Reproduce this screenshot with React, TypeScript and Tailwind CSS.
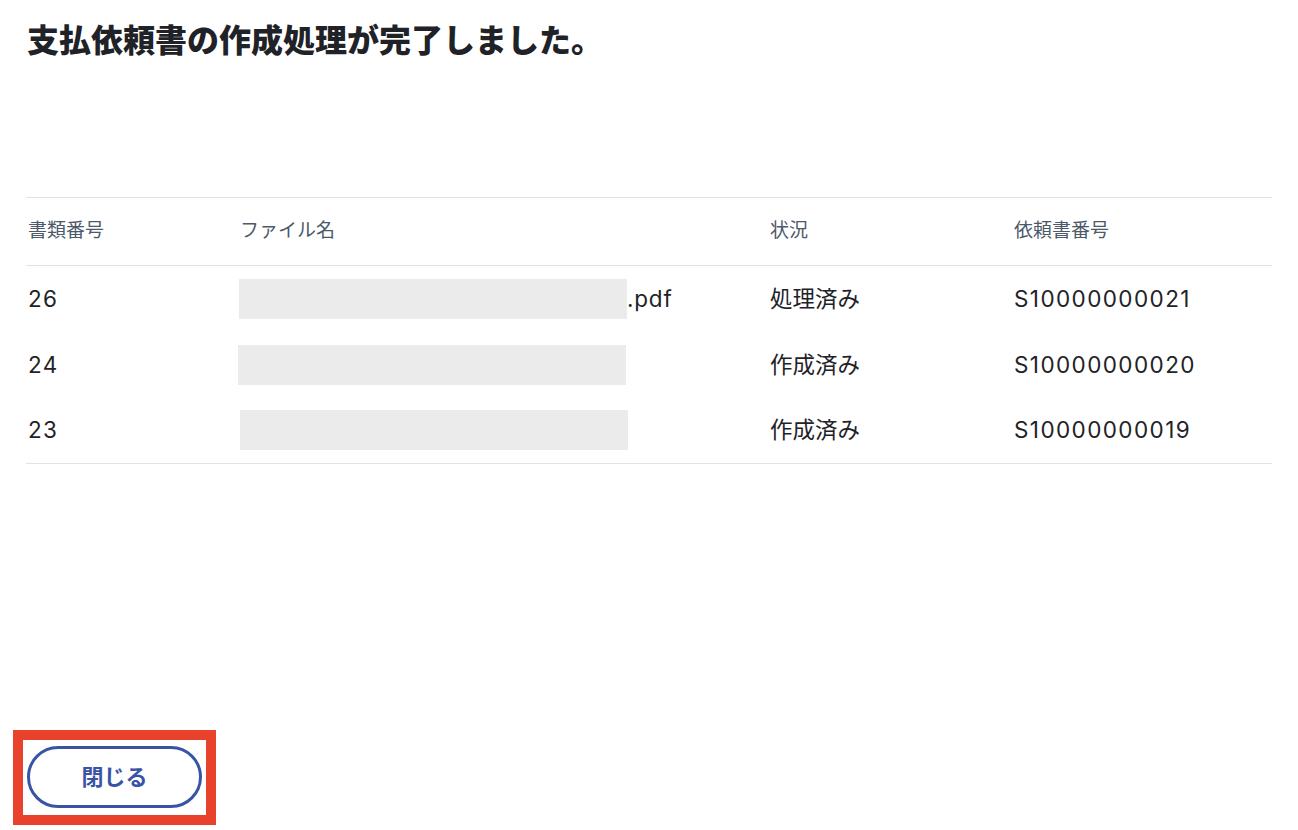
const rows = [
  { no: "26", offset: "ml-[-1px]", ext: ".pdf", status: "処理済み", request: "S10000000021" },
  { no: "24", offset: "ml-[-2px]", ext: "", status: "作成済み", request: "S10000000020" },
  { no: "23", offset: "ml-0", ext: "", status: "作成済み", request: "S10000000019" },
]

export default function App() {
  return (
    <div
      className="min-h-[830px] bg-white text-[#1f2328]"
      style={{ fontFamily: '"Inter", "Noto Sans CJK JP", sans-serif' }}
    >
      <div className="px-[26px] pt-[17px]">
        <h1 className="text-[32px] font-black leading-[48px] pl-[1px]">支払依頼書の作成処理が完了しました。</h1>

        {/* Result table */}
        <table className="mt-[132px] w-full border-collapse table-fixed">
          <thead>
            <tr className="border-y border-[#dfe2e6] text-left text-[19px] text-[#4d5968]">
              <th className="h-[68px] w-[212px] pl-[2px] font-normal">書類番号</th>
              <th className="w-[530px] pl-[2px] font-normal">ファイル名</th>
              <th className="w-[244px] pl-[2px] font-normal">状況</th>
              <th className="pl-[2px] font-normal">依頼書番号</th>
            </tr>
          </thead>
          <tbody className="text-[22.5px]">
            {rows.map((r, i) => (
              <tr key={r.no} className={i === rows.length - 1 ? "border-b border-[#dfe2e6]" : ""}>
                <td className="h-[66px] pl-[2px] tracking-[1.4px]">{r.no}</td>
                <td className="pl-[2px]">
                  <div className="flex items-center">
                    <div className={`h-[40px] w-[388px] bg-[#ebebeb] ${r.offset}`} />
                    <span className="tracking-[0.8px]">{r.ext}</span>
                  </div>
                </td>
                <td className="pl-[2px]">{r.status}</td>
                <td className="pl-[2px] tracking-[1.4px]">{r.request}</td>
              </tr>
            ))}
          </tbody>
        </table>
      </div>

      {/* Close button (highlighted) */}
      <div className="mt-[266px] pl-[13px]">
        <div className="inline-block border-[10px] border-[#e8412c] px-[4px] pt-[6px] pb-[7px]">
          <button className="flex h-[62px] w-[175px] items-center justify-center rounded-full border-[3px] border-[#3954a5] text-[22px] font-bold text-[#3954a5]">
            閉じる
          </button>
        </div>
      </div>
    </div>
  )
}
